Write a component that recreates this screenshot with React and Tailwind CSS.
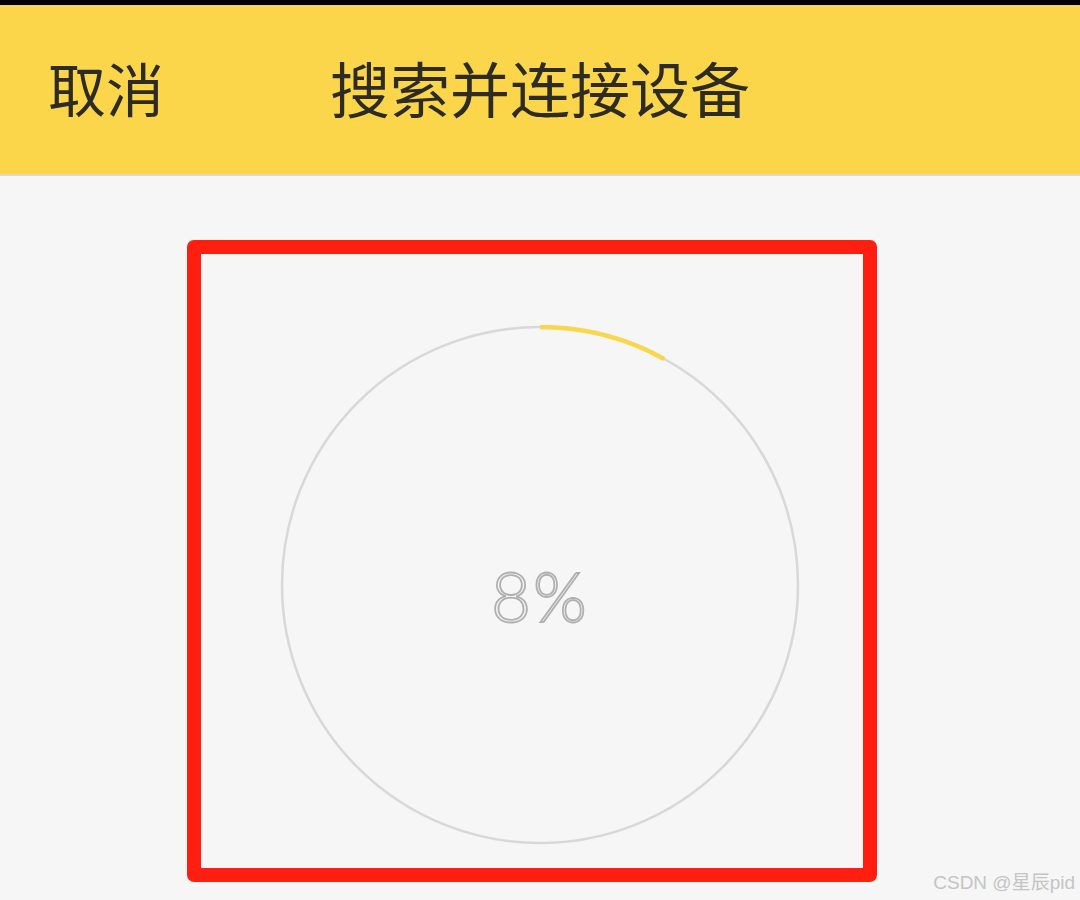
import React from 'react';

const RADIUS = 258;
const CIRC = 2 * Math.PI * RADIUS;

const ProgressRing = ({ percent }) => {
  const dash = (CIRC * percent) / 100;

  return (
    <div className="grid w-[520px] h-[520px]">
      <svg
        className="[grid-area:1/1]"
        width="520"
        height="520"
        viewBox="0 0 520 520"
      >
        <circle cx="260" cy="260" r={RADIUS} fill="none" stroke="#d8d8d8" strokeWidth="2.5" />
        {/* progress arc, starts at 12 o'clock */}
        <circle
          cx="260"
          cy="260"
          r={RADIUS}
          fill="none"
          stroke="#f8d64e"
          strokeWidth="4.5"
          strokeDasharray={`${dash} ${CIRC}`}
          transform="rotate(-90 260 260)"
        />
      </svg>
      <div className="[grid-area:1/1] flex items-center justify-center pt-[20px]">
        <span className="font-['Lato','Noto_Sans',sans-serif] font-light text-[69px] leading-none text-transparent [-webkit-text-stroke:1.8px_#b0b0b0] tracking-[2px]">
          {percent}%
        </span>
      </div>
    </div>
  );
};

const App = () => {
  return (
    <div className="relative min-h-[900px] bg-[#f6f6f6] font-['Noto_Sans','Noto_Sans_CJK_SC',sans-serif] overflow-hidden">
      {/* status strip */}
      <div className="h-[5px] bg-black" />

      {/* Header */}
      <div className="relative h-[171px] bg-[#fbd64a] border-b-2 border-[#dcd8cc] flex items-center">
        <button className="ml-[48px] text-[58px] leading-none text-[#2e2c22] font-['Noto_Sans_CJK_SC',sans-serif] pb-[6px]">
          取消
        </button>
        <h1 className="absolute inset-x-0 text-center text-[60px] leading-none text-[#2e2c22] font-['Noto_Sans_CJK_SC',sans-serif] pb-[6px] pointer-events-none">
          搜索并连接设备
        </h1>
      </div>

      {/* Highlighted search area */}
      <div className="mt-[64px] ml-[187px] w-[690px] h-[642px] border-[14px] border-[#ff1f10] rounded-[7px] pt-[71px] pl-[79px]">
        <ProgressRing percent={8} />
      </div>

      {/* watermark */}
      <div className="absolute right-[5px] bottom-[8px] text-[19px] leading-none text-[#c4c4c4] font-['Liberation_Sans','Noto_Sans_CJK_SC',sans-serif]">
        CSDN @星辰pid
      </div>
    </div>
  );
};

export default App;
